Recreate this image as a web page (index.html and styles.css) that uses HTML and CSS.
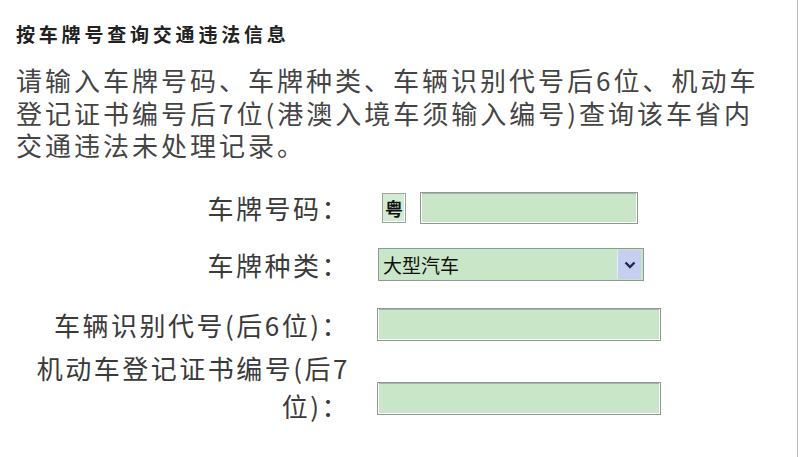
FILE: index.html
```html
<!DOCTYPE html>
<html lang="zh-CN">
<head>
  <meta charset="utf-8">
  <title>按车牌号查询交通违法信息</title>
  <link rel="stylesheet" href="styles.css">
</head>
<body>
  <div class="panel">
    <h3 class="title">按车牌号查询交通违法信息</h3>
    <p class="intro">请输入车牌号码、车牌种类、车辆识别代号后6位、机动车登记证书编号后7位(港澳入境车须输入编号)查询该车省内交通违法未处理记录。</p>

    <div class="form">
      <div class="form-row row-plate">
        <label class="label">车牌号码：</label>
        <div class="control">
          <span class="prov">粤</span>
          <input type="text" class="field field-plate">
        </div>
      </div>

      <div class="form-row row-type">
        <label class="label">车牌种类：</label>
        <div class="control">
          <div class="select">
            <span class="select-text">大型汽车</span>
            <span class="select-arrow">
              <svg width="12" height="8" viewBox="0 0 12 8"><path d="M1.5 1.5 L6 6 L10.5 1.5" fill="none" stroke="#1c2a5c" stroke-width="2.4"/></svg>
            </span>
          </div>
        </div>
      </div>

      <div class="form-row row-vin">
        <label class="label">车辆识别代号(后6位)：</label>
        <div class="control">
          <input type="text" class="field field-wide">
        </div>
      </div>

      <div class="form-row row-cert">
        <label class="label">机动车登记证书编号(后7位)：</label>
        <div class="control control-low">
          <input type="text" class="field field-wide">
        </div>
      </div>
    </div>
  </div>
</body>
</html>
```

FILE: styles.css
```css
html, body {
  margin: 0;
  background: #fff;
}

body {
  font-family: "Noto Sans CJK SC", "Liberation Sans", sans-serif;
  color: #3a3a3a;
}

.panel {
  width: 754px;
  height: 457px;
  padding: 22px 27px 0 16px;
  border-right: 1px solid #b8b8b8;
  overflow: hidden;
}

.title {
  margin: 0;
  font-size: 19px;
  line-height: 24px;
  letter-spacing: 3.8px;
  font-weight: bold;
  color: #222;
}

.intro {
  margin: 18px 0 0;
  font-size: 26px;
  line-height: 32.5px;
  letter-spacing: 3px;
  color: #444;
}

.form {
  margin-top: 27px;
  padding-left: 9px;
}

.form-row {
  display: flex;
  align-items: center;
}

.row-type { margin-top: 19px; }
.row-vin { margin-top: 22px; }
.row-cert { margin-top: 5px; }

.label {
  width: 325px;
  flex: none;
  text-align: right;
  font-size: 26px;
  line-height: 38px;
  letter-spacing: 2.5px;
  color: #3a3a3a;
}

.control {
  display: flex;
  align-items: center;
  margin-left: 27px;
}

.control-low {
  margin-top: 24px;
}

.prov {
  box-sizing: border-box;
  width: 24px;
  height: 30px;
  margin-left: 5px;
  border: 1px solid #9aa39c;
  background: #d3ead3;
  box-shadow: inset -1px -1px 0 #fff;
  font-size: 18px;
  font-weight: bold;
  line-height: 28px;
  text-align: center;
  color: #111;
}

.field {
  box-sizing: border-box;
  height: 33px;
  margin: 0;
  padding: 0 4px;
  border: 1px solid #8f9892;
  background: #c9e6c9;
  box-shadow: inset 1px 0 0 #fff, inset -1px 0 0 #fff, inset 0 -1px 0 #fff, inset 0 1px 0 #a7b0aa;
  outline: none;
}

.field-plate {
  width: 218px;
  height: 32px;
  margin-left: 14px;
}

.field-wide {
  width: 284px;
}

.select {
  box-sizing: border-box;
  width: 266px;
  height: 33px;
  margin-left: 1px;
  display: flex;
  align-items: center;
  justify-content: space-between;
  padding: 1px 2px;
  border: 1px solid #8f9892;
  background: #c9e6c9;
}

.select-text {
  padding-left: 2px;
  font-size: 19px;
  line-height: 28px;
  color: #111;
}

.select-arrow {
  width: 23px;
  height: 29px;
  display: flex;
  align-items: center;
  justify-content: center;
  background: #c7cff0;
  border-left: 1px solid #e6ebf7;
}
```
